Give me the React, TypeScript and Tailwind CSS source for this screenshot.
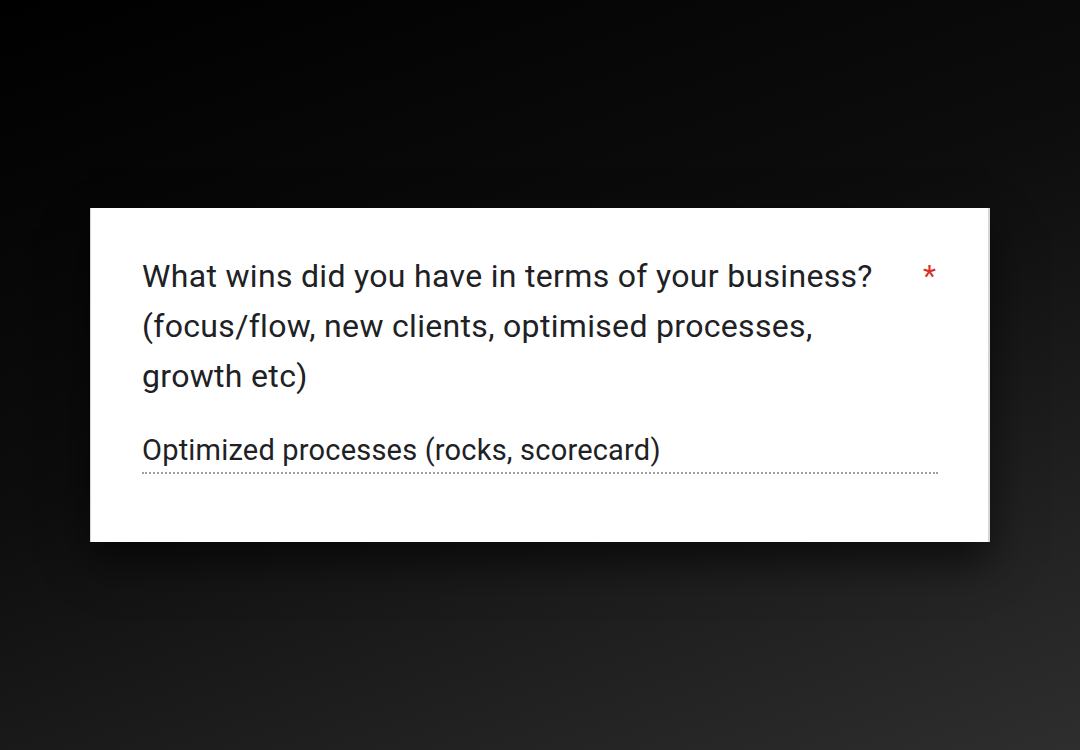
import React from 'react';

const App: React.FC = () => {
  return (
    <div className="w-[1080px] h-[750px] bg-[linear-gradient(160deg,#000000_0%,#0d0d0d_45%,#2e2e2e_100%)] flex items-start justify-start font-['Roboto',sans-serif]">
      {/* Question card */}
      <div className="mt-[208px] ml-[90px] w-[900px] h-[334px] bg-white border-r-2 border-l border-[#d6d6d6] shadow-[0_20px_40px_rgba(0,0,0,0.6)] pl-[51px] pr-[50px] pt-[43px]">
        <div className="flex items-start justify-between">
          <h2 className="text-[32px] leading-[50px] text-[#202124] tracking-[0.32px] w-[760px]">
            What wins did you have in terms of your business? (focus/flow, new clients, optimised processes, growth etc)
          </h2>
          <span className="text-[30px] leading-[50px] text-[#d93025] mr-[2px]">*</span>
        </div>
        <div className="mt-[32px] border-b-2 border-dotted border-[#a0a0a0] pb-[5px]">
          <p className="text-[29px] leading-[34px] text-[#202124] tracking-[0.2px]">
            Optimized processes (rocks, scorecard)
          </p>
        </div>
      </div>
    </div>
  );
};

export default App;
